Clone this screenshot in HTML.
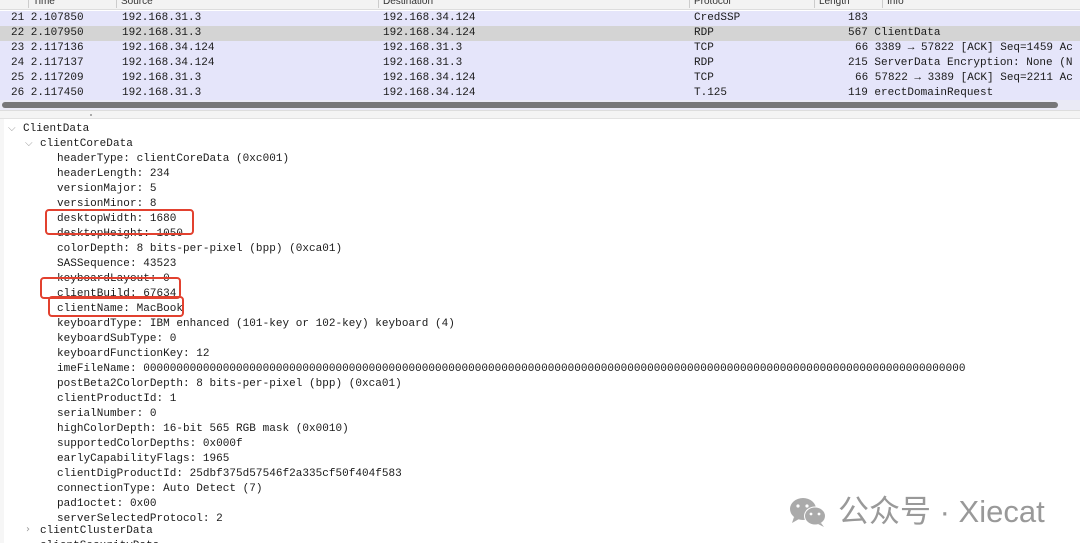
<!DOCTYPE html>
<html><head><meta charset="utf-8"><style>
*{margin:0;padding:0;box-sizing:border-box}
body{width:1080px;height:555px;overflow:hidden;background:#fff;font-family:"Liberation Mono",monospace;font-size:11px;color:#1a1a1a;position:relative}
.hdr{position:absolute;left:0;top:0;width:1080px;height:10px;background:#f3f3f3;border-bottom:1px solid #ddd;font-family:"Liberation Sans",sans-serif;font-size:10px;color:#333;overflow:hidden}
.hdr span{position:absolute;top:-4px;border-left:1px solid #ccc;padding-left:4px;line-height:12px}
.row{position:absolute;left:0;width:1080px;height:15px;background:#e5e5fa;line-height:15px;white-space:pre}
.row span{position:absolute;top:0}
.sel{background:#d4d4d4}
.t{position:absolute;white-space:pre;line-height:15px;letter-spacing:0.03px}
.box{position:absolute;border:2px solid #e2412f;border-radius:4px}
.chev{position:absolute;color:#999;font-size:10px;font-family:"DejaVu Sans",sans-serif}
</style></head><body>
<div class="hdr"><span style="left:28px">Time</span><span style="left:116px">Source</span><span style="left:378px">Destination</span><span style="left:689px">Protocol</span><span style="left:814px">Length</span><span style="left:882px">Info</span></div>
<div class="row" style="top:11px"><span style="left:11px">21 2.107850</span><span style="left:122px">192.168.31.3</span><span style="left:383px">192.168.34.124</span><span style="left:694px">CredSSP</span><span style="left:848px">183</span></div>
<div class="row sel" style="top:26px"><span style="left:11px">22 2.107950</span><span style="left:122px">192.168.31.3</span><span style="left:383px">192.168.34.124</span><span style="left:694px">RDP</span><span style="left:848px">567 ClientData</span></div>
<div class="row" style="top:41px"><span style="left:11px">23 2.117136</span><span style="left:122px">192.168.34.124</span><span style="left:383px">192.168.31.3</span><span style="left:694px">TCP</span><span style="left:855px">66 3389 → 57822 [ACK] Seq=1459 Ac</span></div>
<div class="row" style="top:56px"><span style="left:11px">24 2.117137</span><span style="left:122px">192.168.34.124</span><span style="left:383px">192.168.31.3</span><span style="left:694px">RDP</span><span style="left:848px">215 ServerData Encryption: None (N</span></div>
<div class="row" style="top:71px"><span style="left:11px">25 2.117209</span><span style="left:122px">192.168.31.3</span><span style="left:383px">192.168.34.124</span><span style="left:694px">TCP</span><span style="left:855px">66 57822 → 3389 [ACK] Seq=2211 Ac</span></div>
<div class="row" style="top:86px"><span style="left:11px">26 2.117450</span><span style="left:122px">192.168.31.3</span><span style="left:383px">192.168.34.124</span><span style="left:694px">T.125</span><span style="left:848px">119 erectDomainRequest</span></div>
<div style="position:absolute;left:0;top:100px;width:1080px;height:10px;background:#eaeaf5"></div>
<div style="position:absolute;left:2px;top:102px;width:1056px;height:6px;background:#777;border-radius:3px"></div>
<div style="position:absolute;left:0;top:110px;width:1080px;height:9px;background:#f4f4f4;border-top:1px solid #ddd;border-bottom:1px solid #e2e2e2"></div>
<div style="position:absolute;left:90px;top:114px;width:2px;height:2px;background:#aaa"></div>
<div style="position:absolute;left:0;top:119px;width:4px;height:436px;background:#f6f6f6"></div>
<span class="chev" style="left:8px;top:123px">⌵</span>
<div class="t" style="left:23px;top:122px">ClientData</div>
<span class="chev" style="left:25px;top:138px">⌵</span>
<div class="t" style="left:40px;top:137px">clientCoreData</div>
<div style="position:absolute;left:57px;top:152px">
<div class="t" style="position:relative">headerType: clientCoreData (0xc001)</div>
<div class="t" style="position:relative">headerLength: 234</div>
<div class="t" style="position:relative">versionMajor: 5</div>
<div class="t" style="position:relative">versionMinor: 8</div>
<div class="t" style="position:relative">desktopWidth: 1680</div>
<div class="t" style="position:relative">desktopHeight: 1050</div>
<div class="t" style="position:relative">colorDepth: 8 bits-per-pixel (bpp) (0xca01)</div>
<div class="t" style="position:relative">SASSequence: 43523</div>
<div class="t" style="position:relative">keyboardLayout: 0</div>
<div class="t" style="position:relative">clientBuild: 67634</div>
<div class="t" style="position:relative">clientName: MacBook</div>
<div class="t" style="position:relative">keyboardType: IBM enhanced (101-key or 102-key) keyboard (4)</div>
<div class="t" style="position:relative">keyboardSubType: 0</div>
<div class="t" style="position:relative">keyboardFunctionKey: 12</div>
<div class="t" style="position:relative">imeFileName: 0000000000000000000000000000000000000000000000000000000000000000000000000000000000000000000000000000000000000000000000000000</div>
<div class="t" style="position:relative">postBeta2ColorDepth: 8 bits-per-pixel (bpp) (0xca01)</div>
<div class="t" style="position:relative">clientProductId: 1</div>
<div class="t" style="position:relative">serialNumber: 0</div>
<div class="t" style="position:relative">highColorDepth: 16-bit 565 RGB mask (0x0010)</div>
<div class="t" style="position:relative">supportedColorDepths: 0x000f</div>
<div class="t" style="position:relative">earlyCapabilityFlags: 1965</div>
<div class="t" style="position:relative">clientDigProductId: 25dbf375d57546f2a335cf50f404f583</div>
<div class="t" style="position:relative">connectionType: Auto Detect (7)</div>
<div class="t" style="position:relative">pad1octet: 0x00</div>
<div class="t" style="position:relative">serverSelectedProtocol: 2</div>
</div>
<span class="chev" style="left:26px;top:524px">›</span>
<div class="t" style="left:40px;top:524px">clientClusterData</div>
<div class="t" style="left:40px;top:539px">clientSecurityData</div>
<div style="position:absolute;left:0;top:543px;width:1080px;height:12px;background:#fff"></div>
<div class="box" style="left:45px;top:209px;width:149px;height:26px"></div>
<div class="box" style="left:40px;top:277px;width:141px;height:22px"></div>
<div class="box" style="left:48px;top:296px;width:136px;height:21px"></div>
<svg style="position:absolute;left:788px;top:496px" width="44" height="32" viewBox="0 0 44 32">
<ellipse cx="15" cy="13" rx="13" ry="11" fill="#aaa"/><path d="M6 21 L4 27 L11 23Z" fill="#aaa"/>
<ellipse cx="27" cy="20" rx="11" ry="9.5" fill="#fff"/><ellipse cx="27" cy="20" rx="10" ry="8.5" fill="#aaa"/><path d="M33 27 L36 31 L30 28Z" fill="#aaa"/>
<circle cx="10" cy="10" r="1.6" fill="#fff"/><circle cx="19" cy="10" r="1.6" fill="#fff"/><circle cx="23" cy="18" r="1.4" fill="#fff"/><circle cx="31" cy="18" r="1.4" fill="#fff"/>
</svg>
<div style="position:absolute;left:838px;top:492px;font-family:'Liberation Sans','Noto Sans CJK SC',sans-serif;font-size:31px;color:#999;white-space:pre;line-height:40px">公众号 · Xiecat</div>
</body></html>
